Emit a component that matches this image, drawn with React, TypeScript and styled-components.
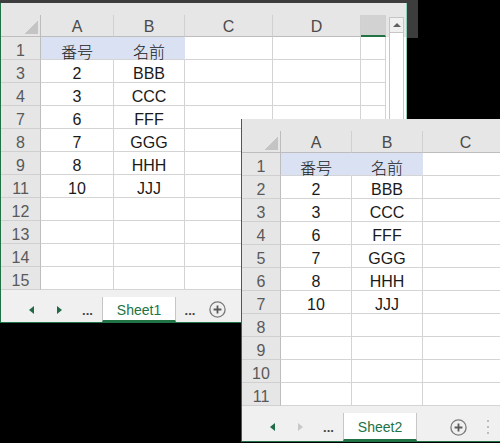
import React from 'react';
import styled, { createGlobalStyle } from 'styled-components';

const GlobalStyle = createGlobalStyle`
  html, body {
    margin: 0;
    padding: 0;
    background: #000;
    width: 500px;
    height: 443px;
    overflow: hidden;
  }
  body {
    font-family: "Liberation Sans", "Noto Sans CJK JP", sans-serif;
  }
`;

type Row = { num: number; a?: string; b?: string; head?: boolean };

const sheet1Rows: Row[] = [
  { num: 1, a: '番号', b: '名前', head: true },
  { num: 3, a: '2', b: 'BBB' },
  { num: 4, a: '3', b: 'CCC' },
  { num: 7, a: '6', b: 'FFF' },
  { num: 8, a: '7', b: 'GGG' },
  { num: 9, a: '8', b: 'HHH' },
  { num: 11, a: '10', b: 'JJJ' },
  { num: 12 },
  { num: 13 },
  { num: 14 },
  { num: 15 },
];

const sheet2Rows: Row[] = [
  { num: 1, a: '番号', b: '名前', head: true },
  { num: 2, a: '2', b: 'BBB' },
  { num: 3, a: '3', b: 'CCC' },
  { num: 4, a: '6', b: 'FFF' },
  { num: 5, a: '7', b: 'GGG' },
  { num: 6, a: '8', b: 'HHH' },
  { num: 7, a: '10', b: 'JJJ' },
  { num: 8 },
  { num: 9 },
  { num: 10 },
  { num: 11 },
];

const Desktop = styled.div`
  position: relative;
  width: 500px;
  height: 443px;
  overflow: hidden;
  background: #000;
`;

const Backdrop = styled.div`
  position: absolute;
  left: 0;
  top: 0;
  width: 418px;
  height: 38px;
  background: #3d3d3d;
`;

const Window = styled.section<{ $x: number; $y: number; $w: number; $edge: string }>`
  position: absolute;
  left: ${p => p.$x}px;
  top: ${p => p.$y}px;
  width: ${p => p.$w}px;
  box-sizing: border-box;
  display: flex;
  flex-direction: column;
  background: #fff;
  border-left: 1px solid #217346;
  border-right: 1px solid ${p => p.$edge};
  border-bottom: 1px solid #217346;
`;

const Main = styled.div`
  display: flex;
`;

const Grid = styled.div<{ $cols: string }>`
  display: grid;
  grid-template-columns: ${p => p.$cols};
  grid-template-rows: 12px 22px repeat(11, 23px);
  font-size: 16px;
  font-weight: 300;
  color: #1a1a1a;
`;

const HeaderGap = styled.div`
  grid-column: 1 / -1;
  background: #e6e6e6;
`;

const Corner = styled.div`
  position: relative;
  background: #e6e6e6;
  border-right: 1px solid #bdbdbd;
  border-bottom: 1px solid #bdbdbd;

  &::after {
    content: '';
    position: absolute;
    right: 2px;
    bottom: 2px;
    width: 14px;
    height: 13px;
    background: linear-gradient(to top left, #c4c4c4 50%, transparent 50%);
  }
`;

const ColHeader = styled.div<{ $selected?: boolean }>`
  box-sizing: border-box;
  display: flex;
  align-items: center;
  justify-content: center;
  padding-top: 2px;
  background: ${p => (p.$selected ? '#d2d2d2' : '#e6e6e6')};
  border-right: 1px solid #d0d0d0;
  border-bottom: ${p => (p.$selected ? '2px solid #217346' : '1px solid #bdbdbd')};
  color: #4a4a4a;
`;

const RowHeader = styled.div`
  box-sizing: border-box;
  display: flex;
  align-items: center;
  justify-content: center;
  padding-top: 5px;
  background: #e6e6e6;
  border-right: 1px solid #bdbdbd;
  border-bottom: 1px solid #d0d0d0;
  color: #595959;
`;

const Cell = styled.div<{ $fill?: boolean }>`
  box-sizing: border-box;
  display: flex;
  align-items: center;
  justify-content: center;
  padding-top: 5px;
  white-space: nowrap;
  background: ${p => (p.$fill ? '#d9e1f2' : '#fff')};
  border-right: 1px solid ${p => (p.$fill ? '#d9e1f2' : '#d4d4d4')};
  border-bottom: 1px solid #d4d4d4;
`;

const ScrollArea = styled.div`
  width: 20px;
  box-sizing: border-box;
  display: flex;
  flex-direction: column;
  padding: 14px 2px 0 3px;
  background: linear-gradient(#e6e6e6 34px, #fff 34px);
`;

const Track = styled.div`
  flex: 1;
  display: flex;
  flex-direction: column;
  background: #fff;
  border-left: 1px solid #c6c6c6;
  border-right: 1px solid #c6c6c6;
`;

const UpButton = styled.div`
  height: 14px;
  display: flex;
  align-items: center;
  justify-content: center;
  background: #f0f0f0;
  border-top: 1px solid #c6c6c6;
  border-bottom: 1px solid #c6c6c6;
`;

const UpArrow = styled.span`
  width: 0;
  height: 0;
  border-left: 4px solid transparent;
  border-right: 4px solid transparent;
  border-bottom: 4px solid #606060;
`;

const TabBar = styled.div<{ $h: number }>`
  height: ${p => p.$h}px;
  box-sizing: content-box;
  display: flex;
  align-items: stretch;
  padding: 7px 0 0 16px;
  background: #f0f0f0;
  font-size: 14px;
`;

const NavButton = styled.div`
  width: 28px;
  display: flex;
  align-items: center;
  justify-content: center;
`;

const NavArrow = styled.span<{ $dir: 'left' | 'right'; $disabled?: boolean }>`
  width: 0;
  height: 0;
  border-top: 4px solid transparent;
  border-bottom: 4px solid transparent;
  ${p =>
    p.$dir === 'left'
      ? `border-right: 5px solid ${p.$disabled ? '#c8c8c8' : '#1f6b45'};`
      : `border-left: 5px solid ${p.$disabled ? '#c8c8c8' : '#1f6b45'};`}
`;

const Ellipsis = styled.div<{ $w: number; $hidden?: boolean }>`
  width: ${p => p.$w}px;
  display: flex;
  align-items: center;
  justify-content: center;
  padding-top: 1px;
  font-weight: bold;
  font-size: 13px;
  color: #444;
  visibility: ${p => (p.$hidden ? 'hidden' : 'visible')};
`;

const SheetTab = styled.div`
  width: 74px;
  box-sizing: border-box;
  display: flex;
  align-items: center;
  justify-content: center;
  padding-top: 2px;
  background: #fff;
  border-left: 1px solid #c6c6c6;
  border-right: 1px solid #c6c6c6;
  border-bottom: 2px solid #217346;
  color: #217346;
`;

const IconButton = styled.div<{ $w: number }>`
  width: ${p => p.$w}px;
  display: flex;
  align-items: center;
  justify-content: center;
`;

const AddIcon = () => (
  <svg width="17" height="17" viewBox="0 0 17 17">
    <circle cx="8.5" cy="8.5" r="7.6" fill="none" stroke="#7a7a7a" strokeWidth="1.3" />
    <path d="M8.5 4.6v7.8M4.6 8.5h7.8" stroke="#5a5a5a" strokeWidth="1.8" />
  </svg>
);

const MoreIcon = () => (
  <svg width="4" height="14" viewBox="0 0 4 14">
    <rect x="1" y="0" width="2" height="2" fill="#bdbdbd" />
    <rect x="1" y="6" width="2" height="2" fill="#bdbdbd" />
    <rect x="1" y="12" width="2" height="2" fill="#bdbdbd" />
  </svg>
);

type SheetProps = {
  x: number;
  y: number;
  width: number;
  edge: string;
  cols: number[];
  headers: string[];
  selectedCol?: number;
  rows: Row[];
  sheetName: string;
  tabHeight: number;
  scrollbar?: boolean;
  trailingMore?: boolean;
  nextDisabled?: boolean;
};

const SheetWindow = ({
  x,
  y,
  width,
  edge,
  cols,
  headers,
  selectedCol,
  rows,
  sheetName,
  tabHeight,
  scrollbar,
  trailingMore,
  nextDisabled,
}: SheetProps) => {
  const extra = headers.slice(2);
  return (
    <Window $x={x} $y={y} $w={width} $edge={edge}>
      <Main>
        <Grid $cols={cols.map(c => `${c}px`).join(' ')}>
          <HeaderGap />
          <Corner />
          {headers.map((h, i) => (
            <ColHeader key={i} $selected={i === selectedCol}>
              {h}
            </ColHeader>
          ))}
          {rows.map(r => (
            <React.Fragment key={r.num}>
              <RowHeader>{r.num}</RowHeader>
              <Cell $fill={r.head}>{r.a}</Cell>
              <Cell $fill={r.head}>{r.b}</Cell>
              {extra.map((_, i) => (
                <Cell key={i} />
              ))}
            </React.Fragment>
          ))}
        </Grid>
        {scrollbar && (
          <ScrollArea>
            <Track>
              <UpButton>
                <UpArrow />
              </UpButton>
            </Track>
          </ScrollArea>
        )}
      </Main>
      <TabBar $h={tabHeight}>
        <NavButton>
          <NavArrow $dir="left" />
        </NavButton>
        <NavButton>
          <NavArrow $dir="right" $disabled={nextDisabled} />
        </NavButton>
        <Ellipsis $w={29}>...</Ellipsis>
        <SheetTab>{sheetName}</SheetTab>
        <Ellipsis $w={28} $hidden={!trailingMore}>
          ...
        </Ellipsis>
        <IconButton $w={26}>
          <AddIcon />
        </IconButton>
        {!trailingMore && (
          <IconButton $w={34}>
            <MoreIcon />
          </IconButton>
        )}
      </TabBar>
    </Window>
  );
};

const App = () => {
  return (
    <>
      <GlobalStyle />
      <Desktop>
        <Backdrop />
        <SheetWindow
          x={0}
          y={3}
          width={407}
          edge="#8fd0b8"
          cols={[40, 73, 71, 88, 88, 25]}
          headers={['A', 'B', 'C', 'D', '']}
          selectedCol={4}
          rows={sheet1Rows}
          sheetName="Sheet1"
          tabHeight={25}
          scrollbar
          trailingMore
        />
        <SheetWindow
          x={241}
          y={119}
          width={300}
          edge="#217346"
          cols={[39, 71, 71, 86, 31]}
          headers={['A', 'B', 'C', '']}
          rows={sheet2Rows}
          sheetName="Sheet2"
          tabHeight={28}
          nextDisabled
        />
      </Desktop>
    </>
  );
};

export default App;
